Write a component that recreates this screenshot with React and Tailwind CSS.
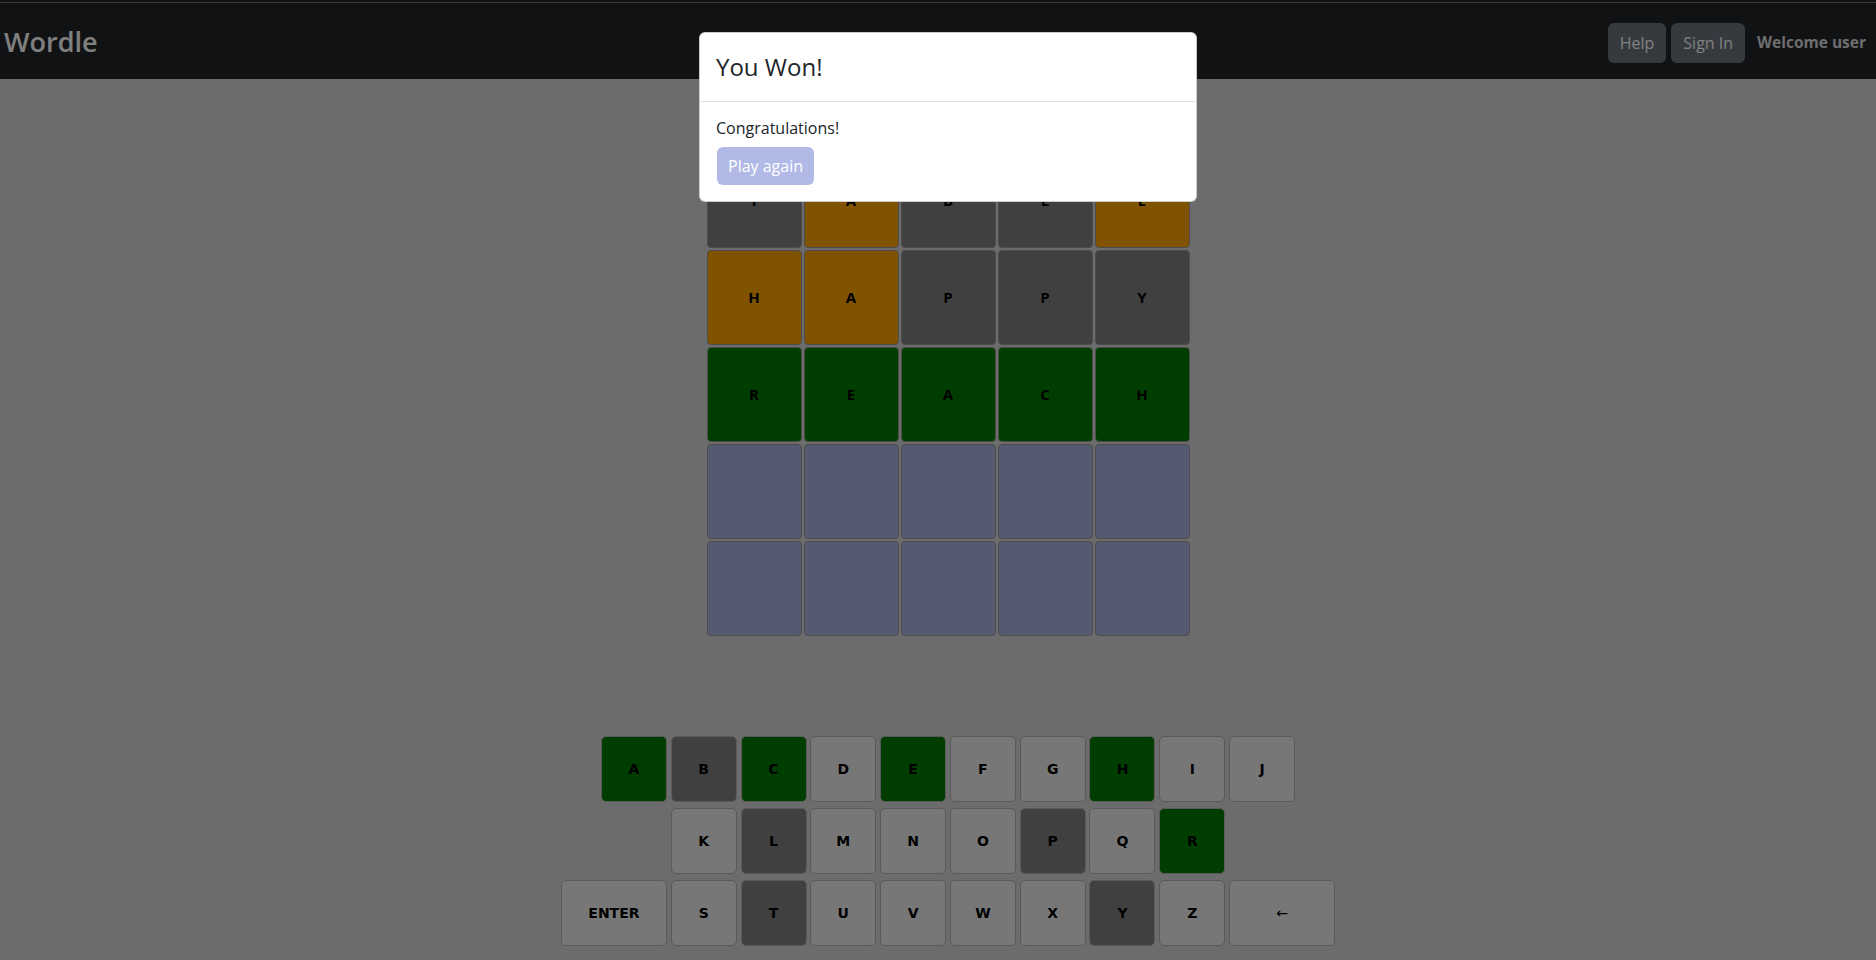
import React from 'react';

const FONT = { fontFamily: '"Open Sans", "Noto Sans", sans-serif' };
const KEY_FONT = { fontFamily: '"DejaVu Sans", Verdana, sans-serif' };

const tileColors = {
  gray: 'bg-[#808080]',
  yellow: 'bg-[#ffa600]',
  green: 'bg-[#007a00]',
  empty: 'bg-[#aab4e0]',
};

const board = [
  [['T', 'gray'], ['A', 'yellow'], ['B', 'gray'], ['L', 'gray'], ['E', 'yellow']],
  [['H', 'yellow'], ['A', 'yellow'], ['P', 'gray'], ['P', 'gray'], ['Y', 'gray']],
  [['R', 'green'], ['E', 'green'], ['A', 'green'], ['C', 'green'], ['H', 'green']],
  [['', 'empty'], ['', 'empty'], ['', 'empty'], ['', 'empty'], ['', 'empty']],
  [['', 'empty'], ['', 'empty'], ['', 'empty'], ['', 'empty'], ['', 'empty']],
];

const keyColors = {
  A: 'green', B: 'gray', C: 'green', E: 'green', H: 'green',
  L: 'gray', P: 'gray', R: 'green', T: 'gray', Y: 'gray',
};

const keyBg = {
  green: 'bg-[#007a00]',
  gray: 'bg-[#808080]',
  none: 'bg-[#eeeeee]',
};

const rows = [
  ['A', 'B', 'C', 'D', 'E', 'F', 'G', 'H', 'I', 'J'],
  ['K', 'L', 'M', 'N', 'O', 'P', 'Q', 'R'],
  ['ENTER', 'S', 'T', 'U', 'V', 'W', 'X', 'Y', 'Z', '←'],
];

const Tile = ({ letter, color }) => (
  <div
    className={`w-[95px] h-[95px] flex items-center justify-center border border-[#999999] rounded-[4px] text-[15px] font-bold text-black ${tileColors[color]}`}
  >
    {letter}
  </div>
);

const Key = ({ label }) => {
  const wide = label === 'ENTER' || label === '←';
  const color = keyColors[label] || 'none';
  return (
    <button
      type="button"
      className={`${wide ? 'w-[106px]' : 'w-[66px]'} h-[66px] flex items-center justify-center border border-[#b4b4b4] rounded-[5px] text-black ${keyBg[color]} ${label === '←' ? 'text-[14px] font-normal' : 'text-[14px] font-bold'}`}
      style={KEY_FONT}
    >
      {label}
    </button>
  );
};

const App = () => {
  return (
    <div className="h-screen bg-[#d8d8d8] relative overflow-hidden" style={FONT}>
      <header className="bg-[#222428] h-[79px] pt-[2px]">
        <div className="border-t border-[#747474] h-full flex items-center justify-between pl-[4px] pr-[10px]">
          <span className="text-white text-[27px] font-semibold leading-none mt-[1px]">Wordle</span>
          <div className="flex items-center mt-[3px]">
            <button type="button" className="h-[40px] px-[12px] rounded-[6px] bg-[#6c737c] text-white text-[16px]">
              Help
            </button>
            <button type="button" className="ml-[5px] h-[40px] px-[12px] rounded-[6px] bg-[#6c737c] text-white text-[16px]">
              Sign In
            </button>
            <span className="ml-[12px] text-[#dcdcdc] text-[15.5px] font-bold">Welcome user</span>
          </div>
        </div>
      </header>

      <main className="pl-[20px]">
        <div className="mx-auto w-[483px] mt-[74px] grid grid-cols-5 gap-[2px]">
          {board.map((row, r) =>
            row.map(([letter, color], c) => <Tile key={`${r}-${c}`} letter={letter} color={color} />)
          )}
        </div>

        <div className="mt-[100px] flex flex-col items-center gap-[6px]">
          {rows.map((row, i) => (
            <div key={i} className="flex gap-[3.8px]">
              {row.map((k) => (
                <Key key={k} label={k} />
              ))}
            </div>
          ))}
        </div>
      </main>

      <div className="absolute inset-0 bg-black/50" />

      <div className="absolute inset-0 pl-[20px]">
        <div className="mx-auto mt-[32px] w-[498px] bg-white rounded-[6px] border border-black/20 text-[#212529]">
          <div className="px-4 py-4 border-b border-[#dee2e6]">
            <h4 className="text-[24px] leading-[36px] font-medium">You Won!</h4>
          </div>
          <div className="p-4">
            <p className="text-[16px] leading-[20px]">Congratulations!</p>
            <button
              type="button"
              className="mt-[9px] ml-[1px] h-[38px] px-[11px] rounded-[6px] bg-[#b1b9e6] text-white text-[16px]"
            >
              Play again
            </button>
          </div>
        </div>
      </div>
    </div>
  );
};

export default App;
